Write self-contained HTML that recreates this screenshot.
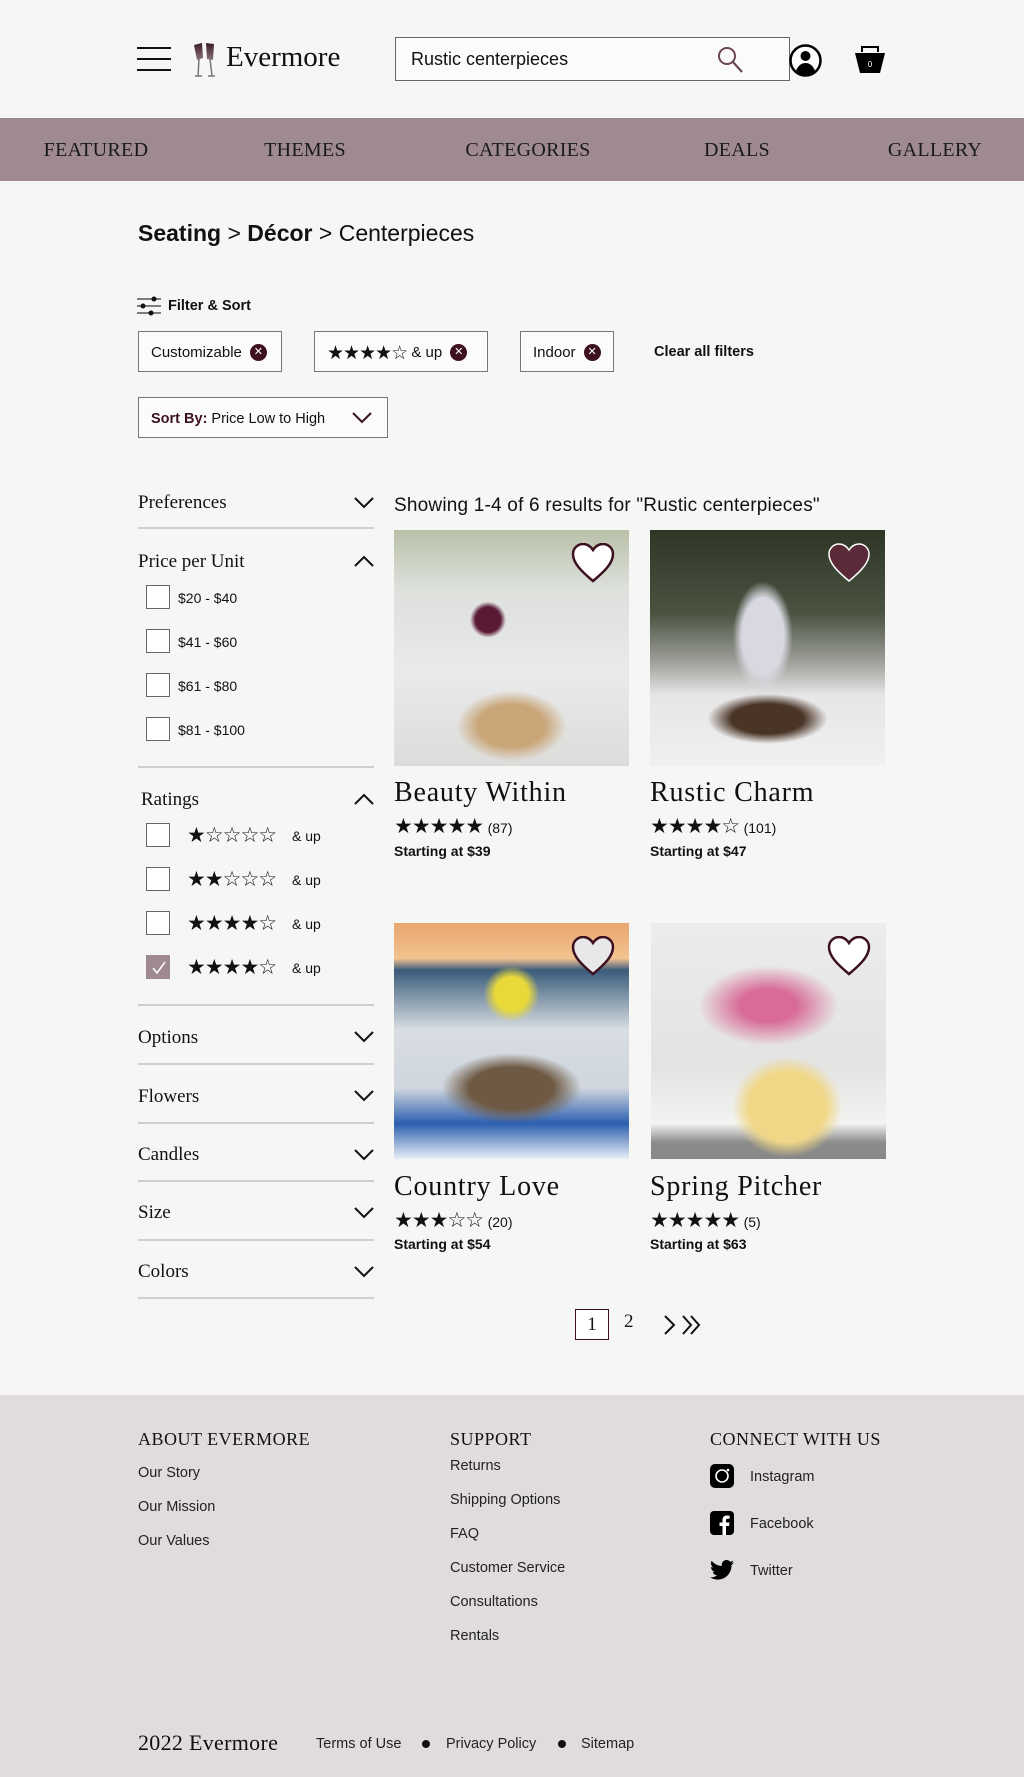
<!DOCTYPE html>
<html><head><meta charset="utf-8"><style>
*{margin:0;padding:0;box-sizing:border-box}
body{width:1024px;height:1777px;position:relative;background:#f6f6f4;font-family:"Liberation Sans",sans-serif;color:#111;overflow:hidden}
.a{position:absolute;white-space:nowrap}
.serif{font-family:"Liberation Serif",serif}
.nav{position:absolute;left:0;top:118px;width:1024px;height:63px;background:#9e8a8f}
.nav span{position:absolute;top:21px;font-family:"Liberation Serif",serif;font-size:20px;color:#1a1a1a;transform:translateX(-50%);letter-spacing:.3px}
.chip{position:absolute;height:41px;border:1px solid #777;background:#fbfbfa;font-size:15px;display:flex;align-items:center;padding-left:12px;padding-top:2px}
.x{display:inline-block;width:17px;height:17px;border-radius:50%;background:#3c1020;color:#fff;font-size:11px;line-height:17px;text-align:center;margin-left:8px}
.st{font-family:"DejaVu Sans",sans-serif;letter-spacing:-1px}
.line{position:absolute;left:138px;width:236px;height:2px;background:#cfcfcf}
.sh{position:absolute;left:138px;font-family:"Liberation Serif",serif;font-size:19px}
.chev{position:absolute;left:354px;width:20px;height:12px}
.cb{position:absolute;left:146px;width:24px;height:24px;border:1px solid #666;background:#fff}
.cbl{position:absolute;left:178px;font-size:14px}
.img{position:absolute;width:235px;height:236px;overflow:hidden}
.t{position:absolute;font-family:"Liberation Serif",serif;font-size:28px;letter-spacing:.8px}
.heart{position:absolute;width:44px;height:40px}
.ft{position:absolute;font-size:14.5px;color:#222}
.fh{position:absolute;font-family:"Liberation Serif",serif;font-size:18px;top:1429px;letter-spacing:.5px}
</style></head><body>
<!-- header -->
<div class="a" style="left:137px;top:47px;width:34px;height:2px;background:#111"></div>
<div class="a" style="left:137px;top:58px;width:34px;height:2px;background:#111"></div>
<div class="a" style="left:137px;top:69px;width:34px;height:2px;background:#111"></div>
<svg class="a" style="left:193px;top:42px" width="24" height="36" viewBox="0 0 24 36"><defs><linearGradient id="g" x1="0" y1="0" x2="0" y2="1"><stop offset="0" stop-color="#3d1a24"/><stop offset="1" stop-color="#8a747a"/></linearGradient></defs><path d="M1 3l8-2 1 15-6 2z" fill="url(#g)"/><path d="M13 1l8 1-1 16-6-1z" fill="url(#g)"/><path d="M6 17l-1 17M17 17l2 17M2 34h7M15 34h7" stroke="#777" stroke-width="1.5"/></svg>
<div class="a serif" style="left:226px;top:41px;font-size:29px">Evermore</div>
<div class="a" style="left:395px;top:37px;width:395px;height:44px;border:1px solid #666;background:#fbfbfa"></div>
<div class="a" style="left:411px;top:49px;font-size:18px">Rustic centerpieces</div>
<svg class="a" style="left:716px;top:45px" width="28" height="30" viewBox="0 0 28 30"><circle cx="11" cy="11" r="8" fill="none" stroke="#6b4852" stroke-width="2"/><path d="M17 17l9 10" stroke="#6b4852" stroke-width="2.2"/></svg>
<svg class="a" style="left:789px;top:44px" width="33" height="33" viewBox="0 0 33 33"><circle cx="16.5" cy="16.5" r="15" fill="#fff" stroke="#000" stroke-width="2.5"/><circle cx="16.5" cy="12" r="5" fill="#000"/><path d="M7 27c2-6 6-8 9.5-8s7.5 2 9.5 8c-3 3-6 4-9.5 4s-6.5-1-9.5-4z" fill="#000"/></svg>
<svg class="a" style="left:854px;top:46px" width="32" height="28" viewBox="0 0 32 28"><path d="M8 6V1h16v5" fill="none" stroke="#000" stroke-width="2"/><path d="M1 7h30l-5 20H6z" fill="#000"/><text x="16" y="21" font-size="8" fill="#fff" text-anchor="middle" font-family="Liberation Sans">0</text></svg>
<div class="nav"><span style="left:96px">FEATURED</span><span style="left:305px">THEMES</span><span style="left:528px">CATEGORIES</span><span style="left:737px">DEALS</span><span style="left:935px">GALLERY</span></div>
<!-- breadcrumb -->
<div class="a" style="left:138px;top:220px;font-size:23px"><b>Seating</b> &gt; <b>Décor</b> &gt; Centerpieces</div>
<svg class="a" style="left:137px;top:296px" width="24" height="20" viewBox="0 0 24 20"><path d="M0 3h24M0 10h24M0 17h24" stroke="#555" stroke-width="1.5"/><circle cx="17" cy="3" r="2.5" fill="#111"/><circle cx="6" cy="10" r="2.5" fill="#111"/><circle cx="14" cy="17" r="2.5" fill="#111"/></svg>
<div class="a" style="left:168px;top:298px;font-size:14.5px;font-weight:bold">Filter &amp; Sort</div>
<div class="chip" style="left:138px;top:331px;width:144px">Customizable<span class="x">✕</span></div>
<div class="chip" style="left:314px;top:331px;width:174px"><span class="st" style="font-size:19px">★★★★☆</span>&nbsp;&amp; up<span class="x">✕</span></div>
<div class="chip" style="left:520px;top:331px;width:94px">Indoor<span class="x">✕</span></div>
<div class="a" style="left:654px;top:344px;font-size:14.5px;font-weight:bold">Clear all filters</div>
<div class="chip" style="left:138px;top:397px;width:250px;font-size:14.5px"><b style="color:#3c1020">Sort By:</b>&nbsp;Price Low to High</div>
<svg class="a" style="left:352px;top:412px" width="20" height="12" viewBox="0 0 20 12"><path d="M1 1l9 9 9-9" fill="none" stroke="#3c1020" stroke-width="2"/></svg>
<!-- sidebar -->
<div class="sh" style="top:492px">Preferences</div><svg class="chev" style="top:497px" viewBox="0 0 20 12"><path d="M1 1l9 9 9-9" fill="none" stroke="#111" stroke-width="2"/></svg>
<div class="line" style="top:527px"></div>
<div class="sh" style="top:551px">Price per Unit</div><svg class="chev" style="top:555px" viewBox="0 0 20 12"><path d="M1 11l9-9 9 9" fill="none" stroke="#111" stroke-width="2"/></svg>
<div class="cb" style="top:585px"></div><div class="cbl" style="top:590px">$20 - $40</div>
<div class="cb" style="top:629px"></div><div class="cbl" style="top:634px">$41 - $60</div>
<div class="cb" style="top:673px"></div><div class="cbl" style="top:678px">$61 - $80</div>
<div class="cb" style="top:717px"></div><div class="cbl" style="top:722px">$81 - $100</div>
<div class="line" style="top:766px"></div>
<div class="sh" style="top:789px;left:141px">Ratings</div><svg class="chev" style="top:793px" viewBox="0 0 20 12"><path d="M1 11l9-9 9 9" fill="none" stroke="#111" stroke-width="2"/></svg>
<div class="cb" style="top:823px"></div><div class="a st" style="left:187px;top:823px;font-size:21px">★☆☆☆☆</div><div class="cbl" style="left:292px;top:828px">&amp; up</div>
<div class="cb" style="top:867px"></div><div class="a st" style="left:187px;top:867px;font-size:21px">★★☆☆☆</div><div class="cbl" style="left:292px;top:872px">&amp; up</div>
<div class="cb" style="top:911px"></div><div class="a st" style="left:187px;top:911px;font-size:21px">★★★★☆</div><div class="cbl" style="left:292px;top:916px">&amp; up</div>
<div class="cb" style="top:955px;background:#9e8a8f;border-color:#9e8a8f"><svg width="24" height="24" viewBox="0 0 24 24"><path d="M6 12l4 5 8-11" fill="none" stroke="#fff" stroke-width="1.5"/></svg></div><div class="a st" style="left:187px;top:955px;font-size:21px">★★★★☆</div><div class="cbl" style="left:292px;top:960px">&amp; up</div>
<div class="line" style="top:1004px"></div>
<div class="sh" style="top:1027px">Options</div><svg class="chev" style="top:1031px" viewBox="0 0 20 12"><path d="M1 1l9 9 9-9" fill="none" stroke="#111" stroke-width="2"/></svg>
<div class="line" style="top:1063px"></div>
<div class="sh" style="top:1086px">Flowers</div><svg class="chev" style="top:1090px" viewBox="0 0 20 12"><path d="M1 1l9 9 9-9" fill="none" stroke="#111" stroke-width="2"/></svg>
<div class="line" style="top:1122px"></div>
<div class="sh" style="top:1144px">Candles</div><svg class="chev" style="top:1149px" viewBox="0 0 20 12"><path d="M1 1l9 9 9-9" fill="none" stroke="#111" stroke-width="2"/></svg>
<div class="line" style="top:1180px"></div>
<div class="sh" style="top:1202px">Size</div><svg class="chev" style="top:1207px" viewBox="0 0 20 12"><path d="M1 1l9 9 9-9" fill="none" stroke="#111" stroke-width="2"/></svg>
<div class="line" style="top:1239px"></div>
<div class="sh" style="top:1261px">Colors</div><svg class="chev" style="top:1266px" viewBox="0 0 20 12"><path d="M1 1l9 9 9-9" fill="none" stroke="#111" stroke-width="2"/></svg>
<div class="line" style="top:1297px"></div>
<!-- results -->
<div class="a" style="left:394px;top:495px;font-size:19px;letter-spacing:.2px">Showing 1-4 of 6 results for "Rustic centerpieces"</div>
<div class="img" style="left:394px;top:530px;background:radial-gradient(ellipse 55px 35px at 50% 83%,#c9a577 60%,transparent 100%),radial-gradient(circle 18px at 40% 38%,#5a1a35 70%,transparent 100%),linear-gradient(180deg,#b9c0a8 0%,#dde0dc 25%,#e9eaea 60%,#dcdcda 100%)"></div>
<div class="img" style="left:650px;top:530px;background:radial-gradient(ellipse 60px 25px at 50% 80%,#4a3426 60%,transparent 100%),radial-gradient(ellipse 30px 55px at 48% 45%,#d8d8e0 70%,transparent 100%),linear-gradient(180deg,#2e3626 0%,#4a5240 35%,#9a9c96 55%,#e6e6e6 70%,#f0f0f0 100%)"></div>
<svg class="heart" style="left:571px;top:543px" viewBox="0 0 44 40"><path d="M22 38C10 28 2 20 2 11 2 5 7 1 12 1c5 0 8 3 10 6 2-3 5-6 10-6 5 0 10 4 10 10 0 9-8 17-20 27z" fill="#fff" stroke="#3c1020" stroke-width="2.5"/></svg>
<svg class="heart" style="left:827px;top:543px" viewBox="0 0 44 40"><path d="M22 38C10 28 2 20 2 11 2 5 7 1 12 1c5 0 8 3 10 6 2-3 5-6 10-6 5 0 10 4 10 10 0 9-8 17-20 27z" fill="#5a2a38" stroke="#fff" stroke-width="1.5"/></svg>
<div class="t" style="left:394px;top:777px">Beauty Within</div>
<div class="a" style="left:394px;top:814px"><span class="st" style="font-size:21px">★★★★★</span> <span style="font-size:14px">(87)</span></div>
<div class="a" style="left:394px;top:843px;font-size:14px;font-weight:bold">Starting at $39</div>
<div class="t" style="left:650px;top:777px">Rustic Charm</div>
<div class="a" style="left:650px;top:814px"><span class="st" style="font-size:21px">★★★★☆</span> <span style="font-size:14px">(101)</span></div>
<div class="a" style="left:650px;top:843px;font-size:14px;font-weight:bold">Starting at $47</div>
<div class="img" style="left:394px;top:923px;background:radial-gradient(ellipse 70px 35px at 50% 70%,#6e5a44 60%,transparent 100%),radial-gradient(circle 28px at 50% 30%,#e8d83a 60%,transparent 100%),linear-gradient(180deg,#e9a66e 0%,#f2c391 15%,#3a5b7a 20%,#d8dde2 45%,#cfd6de 70%,#2d5fb0 85%,#e8eef5 100%)"></div>
<div class="img" style="left:651px;top:923px;background:radial-gradient(ellipse 55px 50px at 58% 78%,#f0d787 70%,transparent 100%),radial-gradient(ellipse 70px 40px at 50% 35%,#d86b98 40%,transparent 100%),linear-gradient(180deg,#ececea 0%,#e3e3e1 60%,#f2f2f0 85%,#8c8c8a 93%,#888 100%)"></div>
<svg class="heart" style="left:571px;top:936px" viewBox="0 0 44 40"><path d="M22 38C10 28 2 20 2 11 2 5 7 1 12 1c5 0 8 3 10 6 2-3 5-6 10-6 5 0 10 4 10 10 0 9-8 17-20 27z" fill="#e8e8ea" stroke="#3c1020" stroke-width="2.5"/></svg>
<svg class="heart" style="left:827px;top:936px" viewBox="0 0 44 40"><path d="M22 38C10 28 2 20 2 11 2 5 7 1 12 1c5 0 8 3 10 6 2-3 5-6 10-6 5 0 10 4 10 10 0 9-8 17-20 27z" fill="#fff" stroke="#3c1020" stroke-width="2.5"/></svg>
<div class="t" style="left:394px;top:1171px">Country Love</div>
<div class="a" style="left:394px;top:1208px"><span class="st" style="font-size:21px">★★★☆☆</span> <span style="font-size:14px">(20)</span></div>
<div class="a" style="left:394px;top:1236px;font-size:14px;font-weight:bold">Starting at $54</div>
<div class="t" style="left:650px;top:1171px">Spring Pitcher</div>
<div class="a" style="left:650px;top:1208px"><span class="st" style="font-size:21px">★★★★★</span> <span style="font-size:14px">(5)</span></div>
<div class="a" style="left:650px;top:1236px;font-size:14px;font-weight:bold">Starting at $63</div>
<!-- pagination -->
<div class="a serif" style="left:575px;top:1309px;width:34px;height:31px;border:1.5px solid #3c1020;background:#fff;text-align:center;font-size:19px;line-height:29px">1</div>
<div class="a serif" style="left:624px;top:1311px;font-size:19px">2</div>
<svg class="a" style="left:663px;top:1314px" width="40" height="22" viewBox="0 0 40 22"><path d="M2 2l9 9-9 9M20 2l8 9-8 9M28 2l8 9-8 9" fill="none" stroke="#111" stroke-width="2"/></svg>
<!-- footer -->
<div class="a" style="left:0;top:1395px;width:1024px;height:382px;background:#e0dcdd"></div>
<div class="fh" style="left:138px">ABOUT EVERMORE</div>
<div class="fh" style="left:450px">SUPPORT</div>
<div class="fh" style="left:710px">CONNECT WITH US</div>
<div class="ft" style="left:138px;top:1465px">Our Story</div>
<div class="ft" style="left:138px;top:1499px">Our Mission</div>
<div class="ft" style="left:138px;top:1533px">Our Values</div>
<div class="ft" style="left:450px;top:1458px">Returns</div>
<div class="ft" style="left:450px;top:1492px">Shipping Options</div>
<div class="ft" style="left:450px;top:1526px">FAQ</div>
<div class="ft" style="left:450px;top:1560px">Customer Service</div>
<div class="ft" style="left:450px;top:1594px">Consultations</div>
<div class="ft" style="left:450px;top:1628px">Rentals</div>
<svg class="a" style="left:710px;top:1464px" width="24" height="24" viewBox="0 0 24 24"><rect width="24" height="24" rx="5" fill="#000"/><circle cx="12" cy="12" r="6" fill="none" stroke="#fff" stroke-width="1.6"/><circle cx="18" cy="6" r="1.3" fill="#fff"/></svg>
<div class="ft" style="left:750px;top:1469px">Instagram</div>
<svg class="a" style="left:710px;top:1511px" width="24" height="24" viewBox="0 0 24 24"><rect width="24" height="24" rx="4" fill="#000"/><path d="M16 24V15h3l.5-3.5H16V9.5c0-1 .3-1.7 1.8-1.7H19.6V4.7c-.4 0-1.5-.2-2.7-.2-2.7 0-4.4 1.6-4.4 4.5v2.5H9.5V15h3v9z" fill="#fff"/></svg>
<div class="ft" style="left:750px;top:1516px">Facebook</div>
<svg class="a" style="left:710px;top:1560px" width="24" height="20" viewBox="0 0 24 20"><path d="M24 2.4c-.9.4-1.8.6-2.8.8 1-.6 1.8-1.6 2.2-2.7-1 .6-2 1-3.1 1.2C19.3.7 18 0 16.6 0c-2.7 0-4.9 2.2-4.9 4.9 0 .4 0 .8.1 1.1C7.700 5.8 4.100 3.900 1.700.9c-.4.7-.7 1.600-.7 2.500 0 1.700.9 3.200 2.200 4.100-.8 0-1.600-.2-2.200-.6v.1c0 2.400 1.700 4.400 3.900 4.800-.4.1-.8.2-1.300.2-.3 0-.6 0-.9-.1.6 2 2.400 3.400 4.600 3.400-1.700 1.300-3.800 2.100-6.100 2.100-.4 0-.8 0-1.200-.1C2.200 18.800 4.800 19.600 7.500 19.600c9.100 0 14-7.500 14-14v-.6c1-.7 1.800-1.600 2.500-2.600z" fill="#000"/></svg>
<div class="ft" style="left:750px;top:1563px">Twitter</div>
<div class="a serif" style="left:138px;top:1730px;font-size:22px;letter-spacing:.3px">2022 Evermore</div>
<div class="ft" style="left:316px;top:1736px">Terms of Use</div>
<div class="a" style="left:422px;top:1740px;width:8px;height:8px;border-radius:50%;background:#111"></div>
<div class="ft" style="left:446px;top:1736px">Privacy Policy</div>
<div class="a" style="left:558px;top:1740px;width:8px;height:8px;border-radius:50%;background:#111"></div>
<div class="ft" style="left:581px;top:1736px">Sitemap</div>
</body></html>
